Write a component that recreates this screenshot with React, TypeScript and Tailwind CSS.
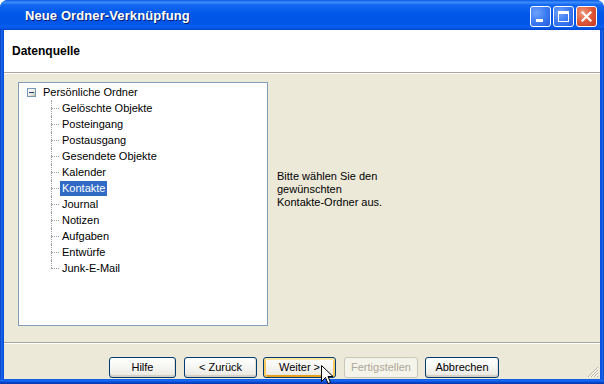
import React from "react";

const items = [
  "Gelöschte Objekte",
  "Posteingang",
  "Postausgang",
  "Gesendete Objekte",
  "Kalender",
  "Kontakte",
  "Journal",
  "Notizen",
  "Aufgaben",
  "Entwürfe",
  "Junk-E-Mail",
];

function XPButton({
  label,
  w,
  className = "",
  variant = "normal",
}: {
  label: string;
  w: string;
  className?: string;
  variant?: "normal" | "hover" | "disabled";
}) {
  if (variant === "disabled") {
    return (
      <div
        className={`${w} h-[21px] rounded-[3px] border border-[#C9C7BA] bg-[#F5F4EA] flex items-center justify-center text-[11px] text-[#ACA899] ${className}`}
      >
        {label}
      </div>
    );
  }
  const extra =
    variant === "hover"
      ? "shadow-[inset_0_2px_0_#FFE7A2,inset_2px_0_0_#FBCA5D,inset_-2px_0_0_#FBCA5D,inset_0_-2px_0_#E5A01A]"
      : "shadow-[inset_0_-2px_0_#D6D0C5,inset_-1px_0_0_#E3DFD5]";
  return (
    <div
      className={`${w} h-[21px] rounded-[3px] border border-[#003C74] bg-[linear-gradient(to_bottom,#FFFFFF_0%,#F7F7F4_40%,#ECEBE6_85%,#D6D0C5_100%)] ${extra} flex items-center justify-center text-[11px] text-black ${className}`}
    >
      {label}
    </div>
  );
}

export default function App() {
  return (
    <div
      className="w-[604px] h-[384px] relative overflow-hidden bg-white"
      style={{ fontFamily: "'Liberation Sans', Arial, sans-serif" }}
    >
      <div className="w-[604px] h-[384px] flex flex-col rounded-t-[8px] overflow-hidden bg-[#0A55E5]">
        {/* Title bar */}
        <div className="h-[30px] shrink-0 flex items-center bg-[linear-gradient(to_bottom,#0A5AE8_0%,#3D8EFA_8%,#1468F2_16%,#0058E8_45%,#0055E6_75%,#0A5FF0_90%,#0046CF_100%)]">
          <span className="ml-[25px] mt-[1px] text-white font-bold text-[13px] tracking-[0.1px] [text-shadow:1px_1px_0_#0A1E72]">
            Neue Ordner-Verknüpfung
          </span>
          <div className="ml-auto mr-[7px] mt-[2px] flex gap-[2px]">
            {/* minimize */}
            <div className="w-[21px] h-[21px] rounded-[3px] border border-white bg-[radial-gradient(circle_at_30%_30%,#6FA2FA_0%,#3C7CF2_50%,#2558E0_100%)] relative">
              <div className="absolute left-[5px] top-[12px] w-[7px] h-[3px] bg-white" />
            </div>
            {/* maximize */}
            <div className="w-[21px] h-[21px] rounded-[3px] border border-white bg-[radial-gradient(circle_at_30%_30%,#6FA2FA_0%,#3C7CF2_50%,#2558E0_100%)] relative">
              <div className="absolute left-[4px] top-[4px] w-[11px] h-[11px] border border-white border-t-[3px]" />
            </div>
            {/* close */}
            <div className="w-[21px] h-[21px] rounded-[3px] border border-white bg-[radial-gradient(circle_at_30%_30%,#F09A80_0%,#E0583A_50%,#C2361E_100%)] flex items-center justify-center">
              <svg width="11" height="11" viewBox="0 0 11 11">
                <path d="M1.5 1.5 L9.5 9.5 M9.5 1.5 L1.5 9.5" stroke="white" strokeWidth="2.2" strokeLinecap="square" />
              </svg>
            </div>
          </div>
        </div>

        {/* Body */}
        <div className="flex flex-1 min-h-0">
          <div className="w-[4px] shrink-0 bg-[linear-gradient(to_right,#0836A8,#1A6BF0,#0A58E6,#0848D2)]" />
          <div className="flex-1 flex flex-col bg-[#ECE9D8]">
            {/* Header */}
            <div className="h-[42px] shrink-0 bg-white flex items-center">
              <span className="ml-[8px] mt-[0px] font-bold text-[12px] text-black">Datenquelle</span>
            </div>
            <div className="h-px bg-[#ACA899]" />
            <div className="h-px bg-white" />

            {/* Main */}
            <div className="flex-1 flex items-start pl-[14px] pt-[8px]">
              <div className="w-[250px] h-[244px] border border-[#7F9DB9] bg-white pt-[1px] text-[11px] text-black">
                {/* root */}
                <div className="h-[16px] flex items-center">
                  <div className="ml-[8px] w-[9px] h-[9px] border border-[#7898B5] bg-[linear-gradient(135deg,#FFFFFF_0%,#F0EFE8_50%,#C6C2B2_100%)] flex items-center justify-center">
                    <div className="w-[5px] h-px bg-[#1E3F7A]" />
                  </div>
                  <span className="ml-[7px]">Persönliche Ordner</span>
                </div>
                {items.map((it, i) => {
                  const last = i === items.length - 1;
                  const sel = it === "Kontakte";
                  return (
                    <div key={it} className="h-[16px] flex items-center">
                      <div className="ml-[32px] w-[9px] h-[16px] relative shrink-0">
                        <div
                          className={`absolute left-0 top-0 w-0 border-l border-dotted border-[#A0A0A0] ${
                            last ? "h-[8px]" : "h-[16px]"
                          }`}
                        />
                        <div className="absolute left-0 top-[8px] w-[8px] h-0 border-t border-dotted border-[#A0A0A0]" />
                      </div>
                      <span
                        className={`px-[2px] h-[15px] leading-[15px] ${
                          sel ? "bg-[#316AC5] text-white" : ""
                        }`}
                      >
                        {it}
                      </span>
                    </div>
                  );
                })}
              </div>
              <div className="ml-[9px] mt-[88px] text-[11px] leading-[13px] text-black">
                <div>Bitte wählen Sie den</div>
                <div>gewünschten</div>
                <div>Kontakte-Ordner aus.</div>
              </div>
            </div>

            {/* separator */}
            <div className="h-px bg-[#ACA899]" />
            <div className="h-px bg-white" />

            {/* Footer */}
            <div className="h-[35px] shrink-0 flex items-start pt-[13px] relative">
              <XPButton label="Hilfe" w="w-[67px]" className="ml-[105px]" />
              <XPButton label="< Zurück" w="w-[73px]" className="ml-[8px]" />
              <XPButton label="Weiter >" w="w-[73px]" className="ml-[6px]" variant="hover" />
              <XPButton label="Fertigstellen" w="w-[74px]" className="ml-[8px]" variant="disabled" />
              <XPButton label="Abbrechen" w="w-[74px]" className="ml-[7px]" />
              <svg className="absolute right-[1px] bottom-[1px]" width="13" height="13" viewBox="0 0 13 13">
                <path d="M2 12 L12 2" stroke="#B8B4A2" strokeWidth="1" />
                <path d="M3 12 L12 3" stroke="#FFFFFF" strokeWidth="1" />
                <path d="M5 12 L12 5" stroke="#B8B4A2" strokeWidth="1" />
                <path d="M6 12 L12 6" stroke="#FFFFFF" strokeWidth="1" />
                <path d="M8 12 L12 8" stroke="#B8B4A2" strokeWidth="1" />
                <path d="M9 12 L12 9" stroke="#FFFFFF" strokeWidth="1" />
                <path d="M11 12 L12 11" stroke="#B8B4A2" strokeWidth="1" />
              </svg>
            </div>
          </div>
          <div className="w-[4px] shrink-0 bg-[linear-gradient(to_right,#0848D2,#0A58E6,#1A6BF0,#0836A8)]" />
        </div>
        <div className="h-[5px] shrink-0 bg-[linear-gradient(to_bottom,#0A58E6,#1A6BF0,#0846D0,#0836A8)]" />
      </div>

      {/* mouse cursor */}
      <svg className="absolute left-[321px] top-[365px]" width="13" height="20" viewBox="0 0 13 20">
        <path
          d="M0.5 0.5 L0.5 16.5 L4.5 12.5 L7 18.5 L9.5 17.5 L7 11.5 L12 11.5 Z"
          fill="white"
          stroke="black"
          strokeWidth="1"
        />
      </svg>
    </div>
  );
}
